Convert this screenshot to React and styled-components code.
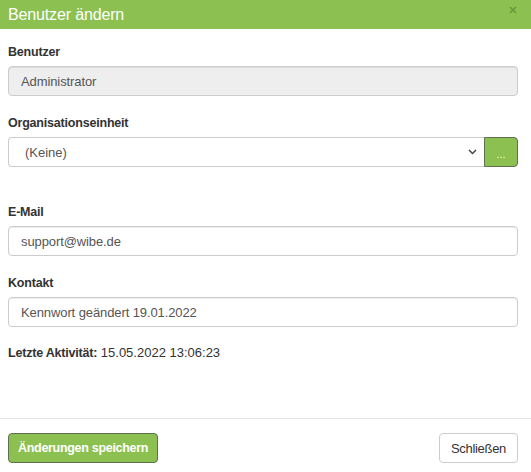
import React from 'react';
import styled, { createGlobalStyle } from 'styled-components';

const GlobalStyle = createGlobalStyle`
  html, body {
    margin: 0;
    padding: 0;
    background: #ffffff;
  }
  body {
    font-family: "Liberation Sans", Arial, sans-serif;
    font-size: 13px;
    color: #333333;
  }
`;

const green = '#8cc152';

const Dialog = styled.div`
  width: 531px;
  height: 472px;
  display: flex;
  flex-direction: column;
  background: #fff;
  box-sizing: border-box;
`;

const Header = styled.div`
  height: 29px;
  background: ${green};
  display: flex;
  align-items: center;
  justify-content: space-between;
  padding: 0 14px 0 8px;
`;

const Title = styled.h4`
  margin: 0;
  font-size: 16px;
  font-weight: normal;
  color: #ffffff;
  line-height: 29px;
  letter-spacing: -0.15px;
`;

const CloseButton = styled.button`
  border: 0;
  background: transparent;
  padding: 0;
  margin-top: -10px;
  width: 9px;
  height: 9px;
  display: flex;
  align-items: center;
  justify-content: center;
  opacity: 0.3;
  cursor: pointer;
`;

const Body = styled.div`
  padding: 14px 13px 0 8px;
  flex: 1;
`;

const Group = styled.div`
  margin-bottom: ${(p) => p.$gap || 18}px;
`;

const Label = styled.label`
  display: block;
  font-weight: bold;
  font-size: 12.5px;
  line-height: 18px;
  height: 18px;
  margin-bottom: 5px;
  color: #333;
  letter-spacing: -0.2px;
`;

const Input = styled.input`
  display: block;
  width: 100%;
  height: 30px;
  box-sizing: border-box;
  padding: 0 12px;
  font-family: inherit;
  font-size: 13px;
  letter-spacing: -0.1px;
  color: #555;
  border: 1px solid #cccccc;
  border-radius: 4px;
  background: ${(p) => (p.readOnly ? '#eeeeee' : '#ffffff')};
  box-shadow: inset 0 1px 1px rgba(0, 0, 0, 0.075);
  outline: none;
`;

const SelectRow = styled.div`
  display: flex;
  height: 30px;
`;

const SelectWrap = styled.div`
  position: relative;
  flex: 1;
`;

const Select = styled.select`
  appearance: none;
  width: 100%;
  height: 30px;
  box-sizing: border-box;
  padding: 0 30px 0 16px;
  font-family: inherit;
  font-size: 13px;
  color: #555;
  background: #fff;
  border: 1px solid #cccccc;
  border-right: 0;
  border-radius: 4px 0 0 4px;
  outline: none;
`;

const Chevron = styled.svg`
  position: absolute;
  right: 7px;
  top: 12px;
  pointer-events: none;
`;

const PickButton = styled.button`
  width: 34px;
  height: 30px;
  box-sizing: border-box;
  border: 1px solid #5e6f52;
  border-radius: 0 4px 4px 0;
  background: ${green};
  color: #f4f8d8;
  font-family: inherit;
  font-size: 11px;
  line-height: 1;
  padding: 4px 0 0;
`;

const Info = styled.div`
  font-size: 13px;
  line-height: 18px;
  color: #333;

  b {
    font-weight: bold;
    font-size: 12.5px;
    letter-spacing: -0.2px;
  }
`;

const Footer = styled.div`
  border-top: 1px solid #e5e5e5;
  padding: 14px 13px 9px 8px;
  display: flex;
  justify-content: space-between;
  align-items: center;
`;

const Button = styled.button`
  height: 30px;
  box-sizing: border-box;
  padding: 0 ${(p) => (p.$primary ? 9 : 11)}px;
  font-family: inherit;
  font-size: ${(p) => (p.$primary ? 12.5 : 13)}px;
  letter-spacing: -0.3px;
  border-radius: 4px;
  cursor: pointer;
  border: 1px solid ${(p) => (p.$primary ? '#5e6f52' : '#cccccc')};
  background: ${(p) => (p.$primary ? green : '#ffffff')};
  color: ${(p) => (p.$primary ? '#ffffff' : '#333333')};
  font-weight: ${(p) => (p.$primary ? 'bold' : 'normal')};
`;

const App = () => {
  return (
    <Dialog>
      <GlobalStyle />
      <Header>
        <Title>Benutzer ändern</Title>
        <CloseButton aria-label="Schließen">
          <svg width="8" height="8" viewBox="0 0 8 8">
            <path d="M1 1L7 7M7 1L1 7" stroke="#1f3a0a" strokeWidth="1.6" />
          </svg>
        </CloseButton>
      </Header>

      <Body>
        <Group>
          <Label>Benutzer</Label>
          <Input readOnly value="Administrator" />
        </Group>

        <Group $gap={36}>
          <Label>Organisationseinheit</Label>
          <SelectRow>
            <SelectWrap>
              <Select defaultValue="">
                <option value="">(Keine)</option>
              </Select>
              <Chevron width="9" height="6" viewBox="0 0 9 6">
                <path d="M1 1l3.5 3.5L8 1" fill="none" stroke="#444" strokeWidth="1.5" />
              </Chevron>
            </SelectWrap>
            <PickButton>...</PickButton>
          </SelectRow>
        </Group>

        <Group>
          <Label>E-Mail</Label>
          <Input defaultValue="support@wibe.de" />
        </Group>

        <Group $gap={17}>
          <Label>Kontakt</Label>
          <Input defaultValue="Kennwort geändert 19.01.2022" />
        </Group>

        <Info>
          <b>Letzte Aktivität:</b> 15.05.2022 13:06:23
        </Info>
      </Body>

      <Footer>
        <Button $primary>Änderungen speichern</Button>
        <Button>Schließen</Button>
      </Footer>
    </Dialog>
  );
};

export default App;
